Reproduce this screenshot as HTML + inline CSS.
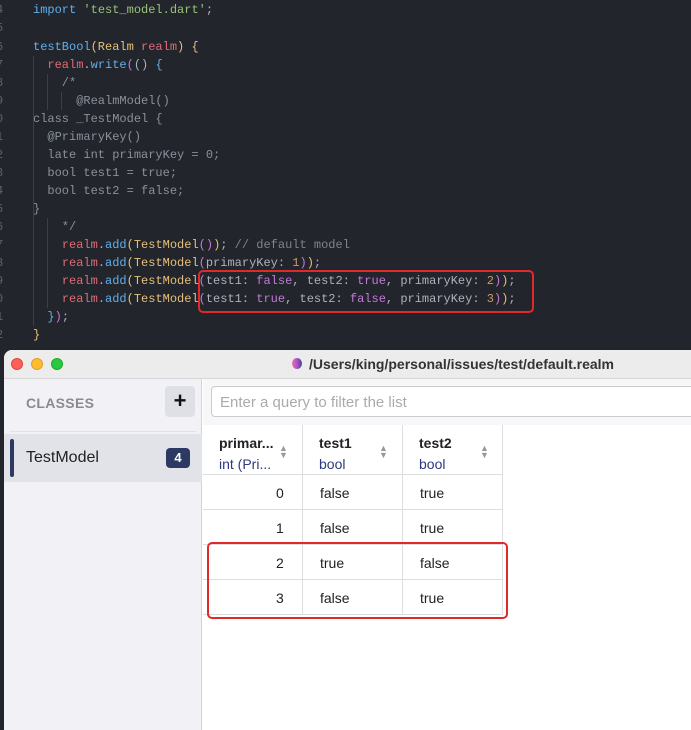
<!DOCTYPE html>
<html><head><meta charset="utf-8"><style>
*{margin:0;padding:0;box-sizing:border-box}
body{width:691px;height:712px;background:#22252b;position:relative;overflow:hidden;font-family:"Liberation Sans",sans-serif}
.code{position:absolute;left:0;top:0;font-family:"Liberation Mono",monospace;font-size:12px;color:#abb2bf}
.l{position:absolute;left:33px;white-space:pre;line-height:18px}
.n{position:absolute;left:-4px;color:#5c6370;line-height:18px}
.k{color:#61afef}.y{color:#e5c07b}.r{color:#e06c75}.b{color:#61afef}.p{color:#c678dd}.o{color:#d19a66}.c{color:#7f848e}.g{color:#98c379}.d{color:#8a919c}
.guide{position:absolute;width:1px;background:#3b4048}
.box{position:absolute;border:2px solid #e02a2a;border-radius:5px}
.win{position:absolute;left:4px;top:350px;width:700px;height:380px;background:#fff;border-radius:8px 0 0 0;overflow:hidden}
.title{position:absolute;left:0;top:0;width:100%;height:29px;background:#ececec;border-bottom:1px solid #d6d6d6}
.dot{position:absolute;top:8px;width:12px;height:12px;border-radius:50%}
.side{position:absolute;left:0;top:29px;width:198px;height:360px;background:#f2f2f6;border-right:1px solid #d4d4d8}
.td{position:absolute;font-size:14px;color:#222}
</style></head><body>
<div class="code">
<div class="n" style="top:1px">4</div><div class="l" style="top:1px"><span class="k">import</span> <span class="g">'test_model.dart'</span>;</div>
<div class="n" style="top:19px">5</div>
<div class="n" style="top:38px">6</div><div class="l" style="top:38px"><span class="b">testBool</span><span class="y">(Realm</span> <span class="r">realm</span><span class="y">) {</span></div>
<div class="n" style="top:56px">7</div><div class="l" style="top:56px">  <span class="r">realm</span>.<span class="b">write</span><span class="p">(</span>() <span class="b">{</span></div>
<div class="n" style="top:74px">8</div><div class="l d" style="top:74px">    /*</div>
<div class="n" style="top:92px">9</div><div class="l d" style="top:92px">      @RealmModel()</div>
<div class="n" style="top:110px">0</div><div class="l d" style="top:110px">class _TestModel {</div>
<div class="n" style="top:128px">1</div><div class="l d" style="top:128px">  @PrimaryKey()</div>
<div class="n" style="top:146px">2</div><div class="l d" style="top:146px">  late int primaryKey = 0;</div>
<div class="n" style="top:164px">3</div><div class="l d" style="top:164px">  bool test1 = true;</div>
<div class="n" style="top:182px">4</div><div class="l d" style="top:182px">  bool test2 = false;</div>
<div class="n" style="top:200px">5</div><div class="l d" style="top:200px">}</div>
<div class="n" style="top:218px">6</div><div class="l d" style="top:218px">    */</div>
<div class="n" style="top:236px">7</div><div class="l" style="top:236px">    <span class="r">realm</span>.<span class="b">add</span><span class="y">(TestModel</span><span class="p">()</span><span class="y">)</span>; <span class="c">// default model</span></div>
<div class="n" style="top:254px">8</div><div class="l" style="top:254px">    <span class="r">realm</span>.<span class="b">add</span><span class="y">(TestModel</span><span class="p">(</span>primaryKey: <span class="o">1</span><span class="p">)</span><span class="y">)</span>;</div>
<div class="n" style="top:272px">9</div><div class="l" style="top:272px">    <span class="r">realm</span>.<span class="b">add</span><span class="y">(TestModel</span><span class="p">(</span>test1: <span class="p">false</span>, test2: <span class="p">true</span>, primaryKey: <span class="o">2</span><span class="p">)</span><span class="y">)</span>;</div>
<div class="n" style="top:290px">0</div><div class="l" style="top:290px">    <span class="r">realm</span>.<span class="b">add</span><span class="y">(TestModel</span><span class="p">(</span>test1: <span class="p">true</span>, test2: <span class="p">false</span>, primaryKey: <span class="o">3</span><span class="p">)</span><span class="y">)</span>;</div>
<div class="n" style="top:308px">1</div><div class="l" style="top:308px">  <span class="b">}</span><span class="p">)</span>;</div>
<div class="n" style="top:326px">2</div><div class="l" style="top:326px"><span class="y">}</span></div>
</div>
<div class="guide" style="left:33px;top:56px;height:270px"></div>
<div class="guide" style="left:47px;top:74px;height:36px"></div>
<div class="guide" style="left:47px;top:218px;height:90px"></div>
<div class="guide" style="left:61px;top:92px;height:18px"></div>
<div class="box" style="left:198px;top:270px;width:336px;height:43px"></div>

<div class="win">
<div class="title">
<div class="dot" style="left:7px;background:#fe5f57;border:1px solid #e0443e"></div>
<div class="dot" style="left:27px;background:#febc2e;border:1px solid #dea123"></div>
<div class="dot" style="left:47px;background:#28c840;border:1px solid #1aab29"></div>
<div style="position:absolute;left:288px;top:8px;width:10px;height:11px;border-radius:50%;background:linear-gradient(90deg,#f6a 0,#a5c 50%,#448 100%)"></div>
<div style="position:absolute;left:305px;top:6px;font-size:14px;font-weight:bold;color:#333">/Users/king/personal/issues/test/default.realm</div>
</div>
<div class="side">
<div style="position:absolute;left:22px;top:16px;font-size:14px;font-weight:bold;color:#8a8a90;letter-spacing:.3px">CLASSES</div>
<div style="position:absolute;left:161px;top:7px;width:30px;height:31px;background:#dfe0e6;border-radius:4px;font-size:22px;font-weight:bold;text-align:center;line-height:30px;color:#111">+</div>
<div style="position:absolute;left:6px;top:52px;width:186px;height:1px;background:#e2e2e6"></div>
<div style="position:absolute;left:0;top:55px;width:198px;height:48px;background:#e2e3e9"></div>
<div style="position:absolute;left:6px;top:60px;width:4px;height:38px;background:#2c3a63;border-radius:2px"></div>
<div style="position:absolute;left:22px;top:70px;font-size:16px;color:#222">TestModel</div>
<div style="position:absolute;left:162px;top:69px;width:24px;height:20px;background:#2c3a63;border-radius:4px;color:#fff;font-size:13px;font-weight:bold;text-align:center;line-height:20px">4</div>
</div>
<div style="position:absolute;left:199px;top:29px;width:500px;height:46px;background:#f7f7f9"></div>
<div style="position:absolute;left:207px;top:36px;width:490px;height:31px;background:#fff;border:1px solid #ccc;border-radius:4px;font-size:15px;color:#aaa;padding:7px 8px">Enter a query to filter the list</div>
<div style="position:absolute;left:199px;top:75px;width:300px;height:190px;border-right:1px solid #ddd"></div>
<div style="position:absolute;left:298px;top:75px;width:1px;height:190px;background:#ddd"></div>
<div style="position:absolute;left:398px;top:75px;width:1px;height:190px;background:#ddd"></div>
<div style="position:absolute;left:199px;top:124px;width:300px;height:1px;background:#ddd"></div>
<div style="position:absolute;left:199px;top:159px;width:300px;height:1px;background:#ddd"></div>
<div style="position:absolute;left:199px;top:194px;width:300px;height:1px;background:#ddd"></div>
<div style="position:absolute;left:199px;top:229px;width:300px;height:1px;background:#ddd"></div>
<div style="position:absolute;left:199px;top:264px;width:300px;height:1px;background:#ddd"></div>
<div class="td" style="left:215px;top:85px;font-weight:bold">primar...</div>
<div class="td" style="left:215px;top:106px;color:#2c3a80">int (Pri...</div>
<div class="td" style="left:315px;top:85px;font-weight:bold">test1</div>
<div class="td" style="left:315px;top:106px;color:#2c3a80">bool</div>
<div class="td" style="left:415px;top:85px;font-weight:bold">test2</div>
<div class="td" style="left:415px;top:106px;color:#2c3a80">bool</div>
<div class="td" style="left:275px;top:95px;font-size:9px;color:#999;line-height:7px">▲<br>▼</div>
<div class="td" style="left:375px;top:95px;font-size:9px;color:#999;line-height:7px">▲<br>▼</div>
<div class="td" style="left:476px;top:95px;font-size:9px;color:#999;line-height:7px">▲<br>▼</div>
<div class="td" style="left:272px;top:135px">0</div><div class="td" style="left:316px;top:135px">false</div><div class="td" style="left:416px;top:135px">true</div>
<div class="td" style="left:272px;top:170px">1</div><div class="td" style="left:316px;top:170px">false</div><div class="td" style="left:416px;top:170px">true</div>
<div class="td" style="left:272px;top:205px">2</div><div class="td" style="left:316px;top:205px">true</div><div class="td" style="left:416px;top:205px">false</div>
<div class="td" style="left:272px;top:240px">3</div><div class="td" style="left:316px;top:240px">false</div><div class="td" style="left:416px;top:240px">true</div>
<div class="box" style="left:203px;top:192px;width:301px;height:77px"></div>
</div>
</body></html>
